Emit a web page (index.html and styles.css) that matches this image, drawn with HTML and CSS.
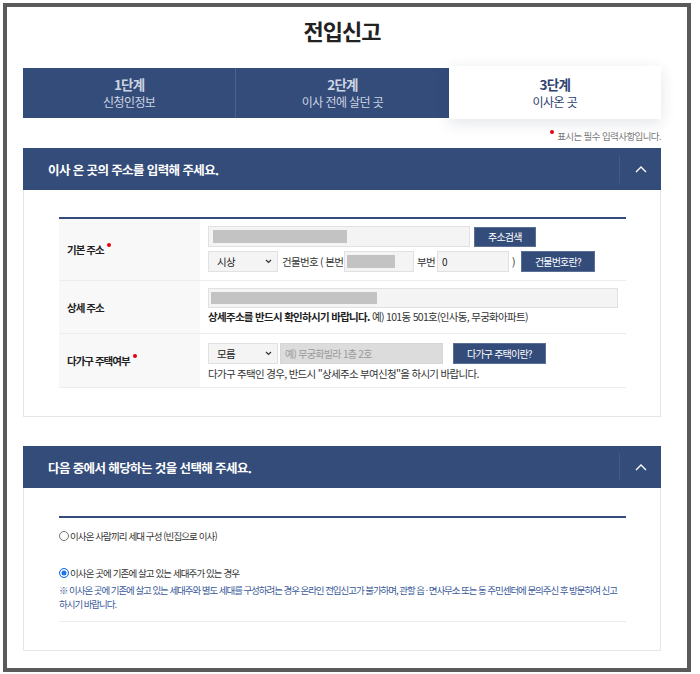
FILE: index.html
```html
<!DOCTYPE html>
<html lang="ko">
<head>
	<meta charset="utf-8">
	<title>전입신고</title>
	<link rel="stylesheet" href="styles.css">
</head>
<body>
	<div class="page">
		<h1 class="title">전입신고</h1>

		<ol class="steps">
			<li class="step"><strong>1단계</strong><span>신청인정보</span></li>
			<li class="step"><strong>2단계</strong><span>이사 전에 살던 곳</span></li>
			<li class="step on"><strong>3단계</strong><span>이사온 곳</span></li>
		</ol>

		<p class="req"><i class="dot"></i>표시는 필수 입력사항입니다.</p>

		<section class="box">
			<div class="box-head">
				<h2>이사 온 곳의 주소를 입력해 주세요.</h2>
				<button class="fold" type="button"><svg width="12" height="7" viewBox="0 0 12 7"><polyline points="1,6 6,1 11,6" fill="none" stroke="#fff" stroke-width="1.4"/></svg></button>
			</div>
			<div class="box-body">
				<div class="form">
					<div class="row r1">
						<div class="th">기본 주소<i class="dot"></i></div>
						<div class="td">
							<div class="line">
								<div class="inp base"><span class="mask m134"></span></div>
								<button class="btn h20" type="button">주소검색</button>
							</div>
							<div class="line">
								<div class="sel">시상<svg width="7" height="5" viewBox="0 0 7 5"><polyline points="1,1 3.5,3.5 6,1" fill="none" stroke="#333" stroke-width="1.2"/></svg></div>
								<span class="lbl first">건물번호 ( 본번</span>
								<div class="inp w70"><span class="mask m48"></span></div>
								<span class="lbl">부번</span>
								<div class="inp w72">0</div>
								<span class="lbl paren">)</span>
								<button class="btn" type="button">건물번호란?</button>
							</div>
						</div>
					</div>
					<div class="row r2">
						<div class="th">상세 주소</div>
						<div class="td">
							<div class="inp full"><span class="mask m166"></span></div>
							<p class="help"><b>상세주소를 반드시 확인하시기 바랍니다.</b> 예) 101동 501호(인사동, 무궁화아파트)</p>
						</div>
					</div>
					<div class="row r3">
						<div class="th">다가구 주택여부<i class="dot"></i></div>
						<div class="td">
							<div class="line">
								<div class="sel">모름<svg width="7" height="5" viewBox="0 0 7 5"><polyline points="1,1 3.5,3.5 6,1" fill="none" stroke="#333" stroke-width="1.2"/></svg></div>
								<div class="inp off">예) 무궁화빌라 1층 2호</div>
								<button class="btn gap" type="button">다가구 주택이란?</button>
							</div>
							<p class="help">다가구 주택인 경우, 반드시 "상세주소 부여신청"을 하시기 바랍니다.</p>
						</div>
					</div>
				</div>
			</div>
		</section>

		<section class="box next">
			<div class="box-head">
				<h2>다음 중에서 해당하는 것을 선택해 주세요.</h2>
				<button class="fold" type="button"><svg width="12" height="7" viewBox="0 0 12 7"><polyline points="1,6 6,1 11,6" fill="none" stroke="#fff" stroke-width="1.4"/></svg></button>
			</div>
			<div class="box-body">
				<div class="opts">
					<label class="opt"><i class="radio"></i>이사온 사람끼리 세대 구성 (빈집으로 이사)</label>
					<label class="opt"><i class="radio on"></i>이사온 곳에 기존에 살고 있는 세대주가 있는 경우</label>
					<p class="note">※ 이사온 곳에 기존에 살고 있는 세대주와 별도 세대를 구성하려는 경우 온라인 전입신고가 불가하며, 관할 읍 · 면사무소 또는 동 주민센터에 문의주신 후 방문하여 신고<br>하시기 바랍니다.</p>
				</div>
			</div>
		</section>
	</div>
</body>
</html>
```

FILE: styles.css
```css
* {
	box-sizing: border-box;
}
html, body {
	margin: 0;
	background-color: #fff;
}
body {
	font-family: "Noto Sans CJK KR", "Noto Sans", sans-serif;
	color: #222;
}
p {
	margin: 0;
}
.page {
	margin: 3px;
	width: 688px;
	height: 669px;
	border: 4px solid #5a5a5a;
	padding: 0 26px 0 16px;
	overflow: hidden;
}
.title {
	margin: 0 0 23px;
	padding-top: 8px;
	font-size: 22px;
	line-height: 30px;
	letter-spacing: -1px;
	text-align: center;
	color: #222;
}

/* steps */
.steps {
	list-style: none;
	margin: 0;
	padding: 0;
	display: flex;
	height: 50px;
	background-color: #344c7a;
}
.step {
	flex: 1;
	display: flex;
	flex-direction: column;
	align-items: center;
	justify-content: center;
	color: #cdd4e2;
}
.step + .step {
	border-left: 1px solid #4b6290;
}
.step strong {
	font-size: 13.5px;
	line-height: 17px;
	letter-spacing: -0.8px;
}
.step span {
	font-size: 12px;
	line-height: 17px;
	letter-spacing: -0.6px;
}
.step.on {
	margin: -2px 0 -1px;
	border-left: 0;
	background-color: #fff;
	color: #2e4270;
	box-shadow: 0 4px 14px rgba(30, 45, 80, 0.13);
}

.dot {
	display: inline-block;
	width: 4px;
	height: 4px;
	border-radius: 50%;
	background-color: #e60012;
	vertical-align: 6px;
	margin: 0 3px 0 2px;
}
.req {
	margin: 11px 0 5px;
	font-size: 9.5px;
	line-height: 14px;
	letter-spacing: -0.6px;
	text-align: right;
	color: #777;
}

/* boxes */
.box-head {
	display: flex;
	align-items: center;
	height: 42px;
	padding-left: 25px;
	background-color: #344c7a;
}
.box-head h2 {
	flex: 1;
	margin: 0;
	font-size: 12.5px;
	letter-spacing: -0.6px;
	color: #fff;
}
.fold {
	width: 42px;
	height: 28px;
	padding: 0;
	border: 0;
	border-left: 1px solid #435b88;
	background-color: transparent;
	display: flex;
	align-items: center;
	justify-content: center;
}
.box-body {
	border: 1px solid #e6e6e6;
	border-top: 0;
	padding: 27px 34px 28px 35px;
}
.box.next {
	margin-top: 29px;
}
.box.next .box-body {
	padding-top: 28px;
}

/* form table */
.form {
	border-top: 2px solid #344c7a;
}
.row {
	display: flex;
	border-bottom: 1px solid #ececec;
}
.th {
	width: 141px;
	flex: none;
	display: flex;
	align-items: center;
	padding-left: 8px;
	background-color: #f8f8f8;
	font-size: 10.5px;
	font-weight: bold;
	letter-spacing: -1px;
	color: #222;
}
.th .dot {
	margin: -10px 0 0 3px;
}
.td {
	flex: 1;
	padding: 7px 8px 8px;
	font-size: 10.5px;
	letter-spacing: -0.7px;
	color: #333;
}
.r3 .td {
	padding-top: 9px;
	padding-bottom: 5px;
}
.line {
	display: flex;
	align-items: center;
	height: 21px;
}
.line + .line {
	margin-top: 4px;
}
.inp {
	height: 21px;
	display: flex;
	align-items: center;
	padding: 0 4px;
	border: 1px solid #e1e1e1;
	background-color: #f4f4f4;
	font-size: 10px;
	color: #222;
}
.inp.base {
	width: 262px;
}
.inp.w70 {
	width: 70px;
	padding-left: 2px;
}
.inp.w72 {
	width: 72px;
}
.inp.full {
	width: 410px;
	height: 20px;
	padding-left: 2px;
}
.inp.off {
	width: 163px;
	margin-left: 2px;
	background-color: #dcdcdc;
	border-color: #d6d6d6;
	color: #9a9a9a;
}
.mask {
	display: block;
	height: 13px;
	background-color: #c3c3c3;
}
.m134 { width: 134px; }
.m48 { width: 48px; }
.m166 { width: 166px; height: 12px; }
.sel {
	width: 70px;
	height: 21px;
	display: flex;
	align-items: center;
	justify-content: space-between;
	padding: 0 5px 0 8px;
	border: 1px solid #e1e1e1;
	background-color: #f4f4f4;
	color: #222;
}
.lbl {
	margin: 0 2px 0 3px;
	white-space: nowrap;
}
.lbl.first {
	margin-left: 4px;
	margin-right: 1px;
}
.lbl.paren {
	margin-right: 6px;
}
.btn {
	height: 21px;
	padding: 0 13px;
	border: 1px solid #5b6f96;
	background-color: #344c7a;
	font-family: inherit;
	font-size: 10px;
	letter-spacing: -0.8px;
	color: #fff;
	white-space: nowrap;
}
.btn.h20 {
	height: 20px;
	margin-left: 4px;
}
.btn.gap {
	margin-left: 10px;
}
.help {
	margin-top: 1px;
	line-height: 16px;
}
.r3 .help {
	margin-top: 2px;
}
.help b {
	color: #222;
}

/* options */
.opts {
	border-top: 2px solid #344c7a;
	border-bottom: 1px solid #ececec;
	padding: 10px 0 10px;
}
.opt {
	display: flex;
	align-items: center;
	height: 16px;
	font-size: 9.5px;
	letter-spacing: -0.9px;
	color: #333;
}
.opt + .opt {
	margin-top: 21px;
}
.radio {
	width: 10px;
	height: 10px;
	margin-right: 1px;
	border: 1px solid #767676;
	border-radius: 50%;
	background-color: #fff;
}
.radio.on {
	border-color: #1a73e8;
	background-color: #1a73e8;
	box-shadow: inset 0 0 0 1.5px #fff;
}
.note {
	margin-top: 2px;
	font-size: 9.5px;
	line-height: 14px;
	letter-spacing: -1.05px;
	white-space: nowrap;
	color: #3a5a9a;
}
```
